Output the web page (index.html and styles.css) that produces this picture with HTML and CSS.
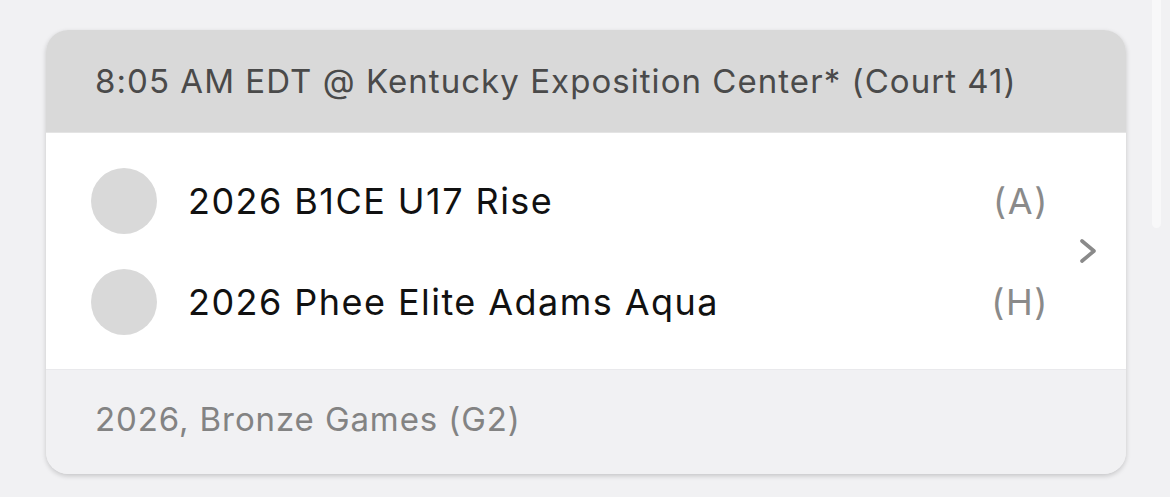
FILE: index.html
```html
<!DOCTYPE html>
<html>
<head>
<meta charset="utf-8">
<link rel="stylesheet" href="styles.css">
</head>
<body>
<div class="page">
  <div class="card">
    <div class="card-head">8:05 AM EDT @ Kentucky Exposition Center* (Court 41)</div>
    <div class="card-body">
      <div class="teams">
        <div class="team">
          <span class="avatar"></span>
          <span class="name">2026 B1CE U17 Rise</span>
          <span class="side">(A)</span>
        </div>
        <div class="team">
          <span class="avatar"></span>
          <span class="name">2026 Phee Elite Adams Aqua</span>
          <span class="side">(H)</span>
        </div>
      </div>
      <svg class="chevron" viewBox="0 0 20 28" width="20" height="28"><path d="M4 4 L16 14 L4 24" fill="none" stroke="#8a8a8a" stroke-width="3.6" stroke-linecap="round" stroke-linejoin="round"/></svg>
    </div>
    <div class="card-foot">2026, Bronze Games (G2)</div>
  </div>
  <div class="scrollbar"></div>
</div>
</body>
</html>
```

FILE: styles.css
```css
html, body {
  margin: 0;
  padding: 0;
  background: #f1f1f3;
  font-family: "Inter", "Open Sans", sans-serif;
}
.page {
  position: relative;
  width: 1170px;
  height: 497px;
  padding: 30px 0 0 46px;
  box-sizing: border-box;
}
.card {
  width: 1080px;
  border-radius: 22px;
  overflow: hidden;
  background: #f1f1f3;
  box-shadow: 0 2px 5px rgba(0,0,0,0.18);
}
.card-head {
  height: 103px;
  box-sizing: border-box;
  background: #d9d9d9;
  color: #4a4a4a;
  font-size: 33px;
  letter-spacing: 1.05px;
  padding-left: 49px;
  display: flex;
  align-items: center;
  border-bottom: 1px solid #e4e4e4;
}
.card-body {
  background: #fff;
  height: 236px;
  display: flex;
  align-items: center;
  padding: 0 28px 0 45px;
  box-sizing: border-box;
}
.teams {
  flex: 1;
  display: flex;
  flex-direction: column;
  gap: 35px;
}
.team {
  display: flex;
  align-items: center;
  height: 66px;
}
.avatar {
  width: 66px;
  height: 66px;
  border-radius: 50%;
  background: #d9d9d9;
  flex: none;
}
.name {
  margin-left: 31px;
  font-size: 36px;
  letter-spacing: 1.45px;
  color: #111;
  flex: 1;
}
.side {
  font-size: 36px;
  letter-spacing: 1.6px;
  color: #8a8a8a;
  margin-right: 29px;
}
.chevron {
  flex: none;
}
.card-foot {
  height: 105px;
  box-sizing: border-box;
  background: #f1f1f3;
  border-top: 1px solid #e9e9ec;
  color: #838383;
  font-size: 33px;
  letter-spacing: 0.9px;
  padding: 0 0 6px 49px;
  display: flex;
  align-items: center;
}
.scrollbar {
  position: absolute;
  left: 1152px;
  top: 0;
  width: 9px;
  height: 228px;
  background: #f8f8f9;
  border-radius: 0 0 5px 5px;
}
```
